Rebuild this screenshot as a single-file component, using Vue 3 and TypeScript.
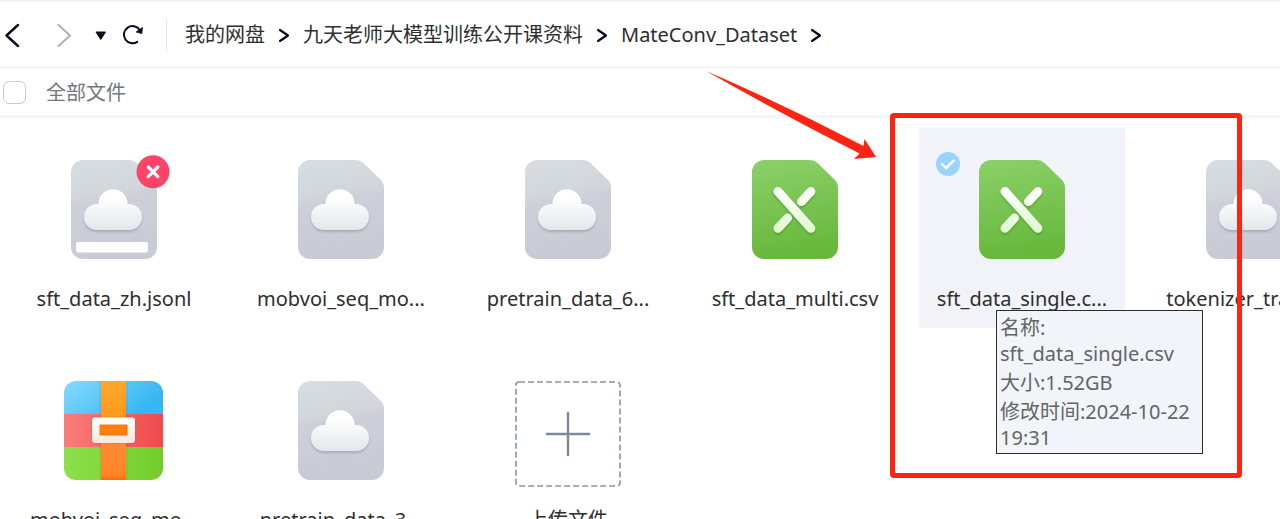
<script setup lang="ts">
import { ref } from 'vue'

type Kind = 'cloud' | 'sheet' | 'archive'

interface FileItem {
  id: number
  name: string
  kind: Kind
  failed?: boolean
  selected?: boolean
  details?: string[]
}

const crumbs: string[] = ['我的网盘', '九天老师大模型训练公开课资料', 'MateConv_Dataset']

const files = ref<FileItem[]>([
  { id: 1, name: 'sft_data_zh.jsonl', kind: 'cloud', failed: true },
  { id: 2, name: 'mobvoi_seq_mo...', kind: 'cloud' },
  { id: 3, name: 'pretrain_data_6...', kind: 'cloud' },
  { id: 4, name: 'sft_data_multi.csv', kind: 'sheet' },
  {
    id: 5,
    name: 'sft_data_single.c...',
    kind: 'sheet',
    selected: true,
    details: ['名称: sft_data_single.csv', '大小:1.52GB', '修改时间:2024-10-22 19:31'],
  },
  { id: 6, name: 'tokenizer_train_...', kind: 'cloud' },
  { id: 7, name: 'mobvoi_seq_mo...', kind: 'archive' },
  { id: 8, name: 'pretrain_data_3...', kind: 'cloud' },
])

const allSelected = ref(false)
</script>

<template>
  <div class="page">
    <svg class="defs" width="0" height="0" aria-hidden="true">
      <defs>
        <linearGradient id="g-file" x1="0" y1="0" x2="0.15" y2="1">
          <stop offset="0" stop-color="#d8dde1" />
          <stop offset="0.38" stop-color="#d1d6db" />
          <stop offset="0.45" stop-color="#ced0d9" />
          <stop offset="1" stop-color="#c8cbd3" />
        </linearGradient>
        <linearGradient id="g-cloud" x1="0" y1="0" x2="0" y2="1">
          <stop offset="0.2" stop-color="#ffffff" />
          <stop offset="1" stop-color="#e3e7ea" />
        </linearGradient>
        <linearGradient id="g-sheet" x1="0" y1="0" x2="0.15" y2="1">
          <stop offset="0" stop-color="#8bd069" />
          <stop offset="1" stop-color="#67b83c" />
        </linearGradient>
        <linearGradient id="g-bar" gradientUnits="userSpaceOnUse" x1="0" y1="27" x2="0" y2="73">
          <stop offset="0" stop-color="#ffffff" />
          <stop offset="1" stop-color="#def8d0" />
        </linearGradient>
        <linearGradient id="g-blue" x1="0" y1="0" x2="1" y2="0.4">
          <stop offset="0" stop-color="#86daff" />
          <stop offset="1" stop-color="#36b6f2" />
        </linearGradient>
        <linearGradient id="g-red" x1="0" y1="0" x2="1" y2="0">
          <stop offset="0" stop-color="#fb7c7c" />
          <stop offset="1" stop-color="#ee4b4b" />
        </linearGradient>
        <linearGradient id="g-green" x1="0" y1="0" x2="1" y2="0">
          <stop offset="0" stop-color="#8ce04a" />
          <stop offset="1" stop-color="#74cc2b" />
        </linearGradient>
        <linearGradient id="g-strap" x1="0" y1="0" x2="0" y2="1">
          <stop offset="0" stop-color="#ffa62d" />
          <stop offset="0.35" stop-color="#ff9a1c" />
          <stop offset="0.65" stop-color="#ff8a33" />
          <stop offset="0.95" stop-color="#ff8426" />
          <stop offset="1" stop-color="#ff6a0a" />
        </linearGradient>
        <linearGradient id="g-clasp" x1="0" y1="0" x2="0" y2="1">
          <stop offset="0" stop-color="#ffffff" />
          <stop offset="1" stop-color="#fde6da" />
        </linearGradient>
        <clipPath id="c-archive"><rect width="99" height="99" rx="12" /></clipPath>
        <filter id="f-cloud" x="-20%" y="-20%" width="140%" height="150%">
          <feDropShadow dx="0" dy="2" stdDeviation="1" flood-color="#9aa2b8" flood-opacity="0.75" />
        </filter>
        <filter id="f-bar" x="-20%" y="-20%" width="140%" height="150%">
          <feDropShadow dx="0" dy="1.5" stdDeviation="1" flood-color="#3f8f1c" flood-opacity="0.7" />
        </filter>
        <filter id="f-strap" x="-30%" y="-20%" width="160%" height="140%">
          <feDropShadow dx="0" dy="0" stdDeviation="1.2" flood-color="#7a4a20" flood-opacity="0.35" />
        </filter>
      </defs>
    </svg>

    <header class="toolbar">
      <nav class="history" aria-label="History">
        <button type="button" class="tool back" aria-label="Back">
          <svg width="20" height="24" viewBox="0 0 20 24">
            <path d="M14 2 2.500 12.500 14 23" fill="none" stroke="#060a1c" stroke-width="2.4" stroke-linecap="round" stroke-linejoin="round" />
          </svg>
        </button>
        <button type="button" class="tool forward" aria-label="Forward">
          <svg width="20" height="24" viewBox="0 0 20 24">
            <path d="M2.500 2 14 12.500 2.500 23" fill="none" stroke="#b3b3b5" stroke-width="2.2" stroke-linecap="round" stroke-linejoin="round" />
          </svg>
        </button>
        <button type="button" class="tool recent" aria-label="Recent folders">
          <svg width="14" height="24" viewBox="0 0 14 24">
            <path d="M2 9h9.500L6.750 16.500Z" fill="#060a1c" stroke="#060a1c" stroke-linejoin="round" />
          </svg>
        </button>
        <button type="button" class="tool refresh" aria-label="Refresh">
          <svg width="24" height="24" viewBox="0 0 24 24">
            <path d="M15.300 18.800A8.600 8.600 0 1 1 17.600 6.800" fill="none" stroke="#060a1c" stroke-width="2" stroke-linecap="round" />
            <path d="M20.500 4.400 19.800 10.600 14.200 9Z" fill="#060a1c" stroke="#060a1c" stroke-width="0.8" stroke-linejoin="round" />
          </svg>
        </button>
      </nav>
      <nav class="crumbs" aria-label="Path">
        <template v-for="crumb in crumbs" :key="crumb">
          <a href="#" class="crumb">{{ crumb }}</a>
          <svg class="sep" width="10" height="14" viewBox="0 0 10 14" aria-hidden="true">
            <path d="M1 2 9 7.5 1 13" fill="none" stroke="#060a1c" stroke-width="2.2" stroke-linecap="round" stroke-linejoin="round" />
          </svg>
        </template>
      </nav>
    </header>

    <div class="filter">
      <label class="all">
        <input v-model="allSelected" type="checkbox" class="box" />
        <span>全部文件</span>
      </label>
    </div>

    <main class="files">
      <ul class="grid">
        <li v-for="file in files" :key="file.id" class="card" :class="{ selected: file.selected }">
          <label v-if="file.selected" class="mark">
            <input v-model="file.selected" type="checkbox" class="mark-input" :aria-label="file.name" />
            <svg class="tick" width="24" height="24" viewBox="0 0 24 24" aria-hidden="true">
              <path d="M6 12.2 10.2 16.2 17.6 8.6" fill="none" stroke="#fff" stroke-width="2.4" stroke-linecap="round" stroke-linejoin="round" />
            </svg>
          </label>

          <svg v-if="file.kind === 'archive'" class="icon" width="100" height="99" viewBox="0 0 100 99" aria-hidden="true">
            <g clip-path="url(#c-archive)">
              <rect width="99" height="33" fill="url(#g-blue)" />
              <rect y="33" width="99" height="33" fill="url(#g-red)" />
              <rect y="66" width="99" height="33" fill="url(#g-green)" />
              <rect x="37" y="-4" width="25" height="107" fill="#ff9a1c" filter="url(#f-strap)" />
              <rect x="37" width="25" height="99" fill="url(#g-strap)" />
              <rect x="34" y="42" width="31" height="14" fill="#ff7f0e" />
            </g>
            <path
              d="M31 36.500h37a3 3 0 0 1 3 3V59a3 3 0 0 1-3 3H31a3 3 0 0 1-3-3V39.500a3 3 0 0 1 3-3ZM35.500 43.500v11h28v-11Z"
              fill="url(#g-clasp)" fill-rule="evenodd" filter="url(#f-strap)"
            />
          </svg>

          <svg v-else class="icon" width="86" height="99" viewBox="0 0 86 99" aria-hidden="true">
            <path
              d="M12 0H57C61 0 63.500 1 66 3.500L82 19C85 22 86 24 86 28V87A12 12 0 0 1 74 99H12A12 12 0 0 1 0 87V12A12 12 0 0 1 12 0Z"
              :fill="file.kind === 'sheet' ? 'url(#g-sheet)' : 'url(#g-file)'"
            />
            <path
              v-if="file.kind === 'cloud'"
              d="M27.300 44A14.700 14.700 0 0 1 56.700 44H58A13 13 0 0 1 58 70H26A13 13 0 0 1 26 44Z"
              fill="url(#g-cloud)" filter="url(#f-cloud)"
            />
            <g v-else fill="none" stroke="url(#g-bar)" stroke-width="9" stroke-linecap="round" filter="url(#f-bar)">
              <path d="M58.800 31.500 49.500 41.500" />
              <path d="M35.500 58 26 68.300" />
              <path d="M26 31.500 58.800 68.300" />
            </g>
            <g v-if="file.failed">
              <rect x="5" y="82" width="72" height="10.500" rx="2" fill="#fff" />
              <circle cx="82" cy="11.800" r="16.500" fill="#fd4468" />
              <path d="M77.200 7l9.600 9.600M86.800 7l-9.600 9.600" stroke="#fff" stroke-width="3.200" stroke-linecap="round" />
            </g>
          </svg>

          <span class="name">{{ file.name }}</span>

          <div v-if="file.details" class="tip" role="tooltip">
            <p v-for="line in file.details" :key="line">{{ line }}</p>
          </div>
        </li>

        <li class="card">
          <button type="button" class="upload">
            <svg class="icon" width="106" height="106" viewBox="0 0 106 106" aria-hidden="true">
              <rect x="1" y="1" width="104" height="104" rx="3" fill="none" stroke="#8a92a3" stroke-width="1.600" stroke-dasharray="6 3" />
              <path d="M32 53H74M53 32V74" stroke="#7f889b" stroke-width="2.400" stroke-linecap="round" />
            </svg>
            <span class="name">上传文件</span>
          </button>
        </li>
      </ul>
    </main>

    <div class="frame" aria-hidden="true"></div>
    <svg class="pointer" width="172" height="92" viewBox="0 0 172 92" aria-hidden="true">
      <path d="M1 1Q80 35 158.500 76L159.500 69 171 87 149 89 154.500 83.500Q75 43 1 1Z" fill="#ff2412" />
    </svg>
  </div>
</template>

<style>
body {
  margin: 0;
  background: #fff;
}
</style>

<style scoped>
.page {
  position: relative;
  height: 100vh;
  overflow: hidden;
  background: #fff;
  color: #2e2e2e;
  font: 20px/28px "Noto Sans", "Noto Sans CJK SC", sans-serif;
}

.defs {
  position: absolute;
}

.toolbar {
  display: flex;
  align-items: center;
  box-sizing: border-box;
  height: 68px;
  padding-left: 4px;
  border-top: 2px solid #f3f3f4;
  border-bottom: 1px solid #efeff0;
}

.history {
  display: flex;
  align-items: center;
  height: 32px;
  padding-right: 20px;
  border-right: 1px solid #e4e5e8;
}

.tool {
  display: flex;
  padding: 0;
  border: 0;
  background: none;
}

.forward {
  margin-left: 32px;
}

.recent {
  margin-left: 18px;
}

.refresh {
  margin-left: 14px;
}

.crumbs {
  display: flex;
  align-items: center;
  gap: 14px;
  padding-left: 18px;
}

.crumb {
  color: inherit;
  text-decoration: none;
  white-space: nowrap;
}

.filter {
  display: flex;
  align-items: center;
  box-sizing: border-box;
  height: 50px;
  padding: 2px 0 0 3px;
  border-bottom: 3px solid #f5f5f6;
  color: #737780;
}

.all {
  display: flex;
  align-items: center;
  gap: 20px;
}

.box {
  appearance: none;
  box-sizing: border-box;
  width: 23px;
  height: 23px;
  margin: 0;
  border: 1px solid #c9cacd;
  border-radius: 6px;
  background: #fff;
}

.grid {
  display: grid;
  grid-template-columns: repeat(6, 206px);
  grid-auto-rows: 200px;
  gap: 21px;
  margin: 0;
  padding: 10px 11px;
  list-style: none;
}

.card {
  position: relative;
  display: flex;
  flex-direction: column;
  align-items: center;
  box-sizing: border-box;
  padding-top: 32px;
}

.selected {
  background: #f1f3f9;
}

.icon {
  display: block;
  flex: none;
  overflow: visible;
}

.name {
  margin-top: 26px;
  white-space: nowrap;
}

.upload {
  display: flex;
  flex-direction: column;
  align-items: center;
  padding: 0;
  border: 0;
  background: none;
  color: inherit;
  font: inherit;
}

.upload .name {
  margin-top: 19px;
}

.mark {
  position: absolute;
  top: 24px;
  left: 17px;
  width: 24px;
  height: 24px;
}

.mark-input {
  appearance: none;
  display: block;
  width: 24px;
  height: 24px;
  margin: 0;
  border-radius: 50%;
  background: #98d4ff;
}

.tick {
  position: absolute;
  inset: 0;
}

.tip {
  position: absolute;
  z-index: 1;
  top: 182px;
  left: 77px;
  display: flex;
  flex-direction: column;
  gap: 3px;
  box-sizing: border-box;
  width: 207px;
  padding: 4px 3px 2px;
  border: 1px solid #2b2b2b;
  background: #f1f5f9;
  color: #646464;
  line-height: 26px;
}

.tip p {
  margin: 0;
}

.frame {
  position: absolute;
  z-index: 2;
  top: 113px;
  left: 890px;
  box-sizing: border-box;
  width: 352px;
  height: 365px;
  border: 5px solid #ff2412;
  border-radius: 4px;
}

.pointer {
  position: absolute;
  z-index: 2;
  top: 70px;
  left: 705px;
}
</style>
